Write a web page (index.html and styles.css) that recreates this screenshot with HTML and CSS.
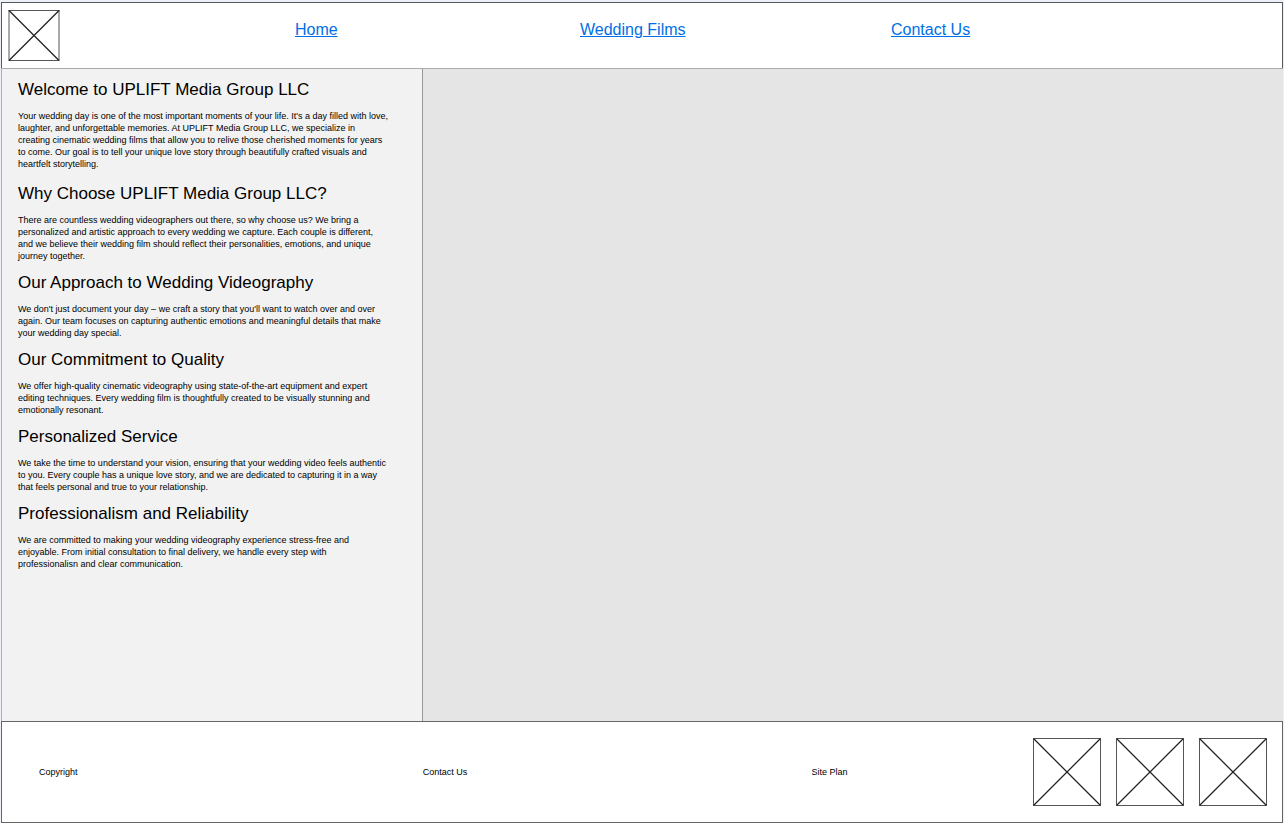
FILE: index.html
```html
<!DOCTYPE html>
<html lang="en">
<head>
<meta charset="utf-8">
<title>UPLIFT Media Group LLC</title>
<link rel="stylesheet" href="styles.css">
</head>
<body>
<header class="site-header">
  <svg class="placeholder logo" viewBox="0 0 52 52" role="img" aria-label="Logo"><path class="frame-side" d="M1 1V51M51 1V51"/><path d="M.5 1.5H51.5M.5 51.5H51.5"/><path class="cross" d="M1 1.5L51 51.5M51 1.5L1 51.5"/></svg>
  <a class="nav-link" href="#home">Home</a>
  <a class="nav-link" href="#films">Wedding Films</a>
  <a class="nav-link" href="#contact">Contact Us</a>
</header>
<main class="content">
  <div class="sidebar">
    <section class="topic intro">
      <h2>Welcome to UPLIFT Media Group LLC</h2>
      <p>Your wedding day is one of the most important moments of your life. It's a day filled with love,<br>laughter, and unforgettable memories. At UPLIFT Media Group LLC, we specialize in<br>creating cinematic wedding films that allow you to relive those cherished moments for years<br>to come. Our goal is to tell your unique love story through beautifully crafted visuals and<br>heartfelt storytelling.</p>
    </section>
    <section class="topic">
      <h2>Why Choose UPLIFT Media Group LLC?</h2>
      <p>There are countless wedding videographers out there, so why choose us? We bring a<br>personalized and artistic approach to every wedding we capture. Each couple is different,<br>and we believe their wedding film should reflect their personalities, emotions, and unique<br>journey together.</p>
    </section>
    <section class="topic">
      <h2>Our Approach to Wedding Videography</h2>
      <p>We don't just document your day – we craft a story that you'll want to watch over and over<br>again. Our team focuses on capturing authentic emotions and meaningful details that make<br>your wedding day special.</p>
    </section>
    <section class="topic">
      <h2>Our Commitment to Quality</h2>
      <p>We offer high-quality cinematic videography using state-of-the-art equipment and expert<br>editing techniques. Every wedding film is thoughtfully created to be visually stunning and<br>emotionally resonant.</p>
    </section>
    <section class="topic">
      <h2>Personalized Service</h2>
      <p>We take the time to understand your vision, ensuring that your wedding video feels authentic<br>to you. Every couple has a unique love story, and we are dedicated to capturing it in a way<br>that feels personal and true to your relationship.</p>
    </section>
    <section class="topic">
      <h2>Professionalism and Reliability</h2>
      <p>We are committed to making your wedding videography experience stress-free and<br>enjoyable. From initial consultation to final delivery, we handle every step with<br>professionalisn and clear communication.</p>
    </section>
  </div>
  <div class="media"></div>
</main>
<footer class="site-footer">
  <span>Copyright</span>
  <span>Contact Us</span>
  <span>Site Plan</span>
  <div class="badges">
    <svg class="placeholder badge" viewBox="0 0 68 68" aria-hidden="true"><path d="M.5 .5H67.5V67.5H.5Z"/><path class="cross" d="M.5 .5L67.5 67.5M67.5 .5L.5 67.5"/></svg>
    <svg class="placeholder badge" viewBox="0 0 68 68" aria-hidden="true"><path d="M.5 .5H67.5V67.5H.5Z"/><path class="cross" d="M.5 .5L67.5 67.5M67.5 .5L.5 67.5"/></svg>
    <svg class="placeholder badge" viewBox="0 0 68 68" aria-hidden="true"><path d="M.5 .5H67.5V67.5H.5Z"/><path class="cross" d="M.5 .5L67.5 67.5M67.5 .5L.5 67.5"/></svg>
  </div>
</footer>
</body>
</html>
```
FILE: styles.css
```css
* {
  box-sizing: border-box;
}

body {
  display: flex;
  flex-direction: column;
  min-height: 100vh;
  margin: 0;
  padding: 2px 1px 0;
  background: #edf1f7;
  color: #000;
  font-family: "Liberation Sans", Arial, sans-serif;
  font-size: 9px;
  line-height: 12px;
}

.site-header {
  display: grid;
  grid-template-columns: 293fr 285fr 311fr 391fr;
  align-items: start;
  padding: 6px 0 7px;
  border: 1px solid #555a5f;
  border-bottom: 0;
  background: #fff;
}

.placeholder {
  display: block;
  fill: none;
  stroke: #555;
  stroke-width: 1;
}

.cross {
  stroke: #222;
  stroke-width: 1.3;
}

.frame-side {
  stroke: #555;
}

.logo {
  width: 52px;
  height: 52px;
  margin-left: 6px;
}

.nav-link {
  justify-self: start;
  margin-top: 11px;
  color: #006fe6;
  font-size: 16px;
  line-height: 20px;
}

.content {
  display: grid;
  grid-template-columns: 422fr 860fr;
  flex: 1;
  border-top: 1px solid #aaa;
}

.sidebar {
  padding: 11px 16px;
  border-right: 1px solid #999;
  border-left: 1px solid #aab2b9;
  background: #f2f2f2;
  white-space: nowrap;
}

.topic {
  margin-bottom: 11px;
}

.intro {
  margin-bottom: 14px;
}

.topic h2 {
  margin: 0 0 10px;
  font-size: 17px;
  font-weight: 400;
  line-height: 20px;
}

.topic p {
  margin: 0;
}

.media {
  background: #e5e5e5;
}

.site-footer {
  display: grid;
  grid-template-columns: 384fr 389fr 222fr 249fr;
  align-items: center;
  padding: 16px 0 16px 37px;
  border: 1px solid #666;
  background: #fff;
}

.badges {
  display: flex;
  gap: 15px;
}

.badge {
  width: 68px;
  height: 68px;
}
```
